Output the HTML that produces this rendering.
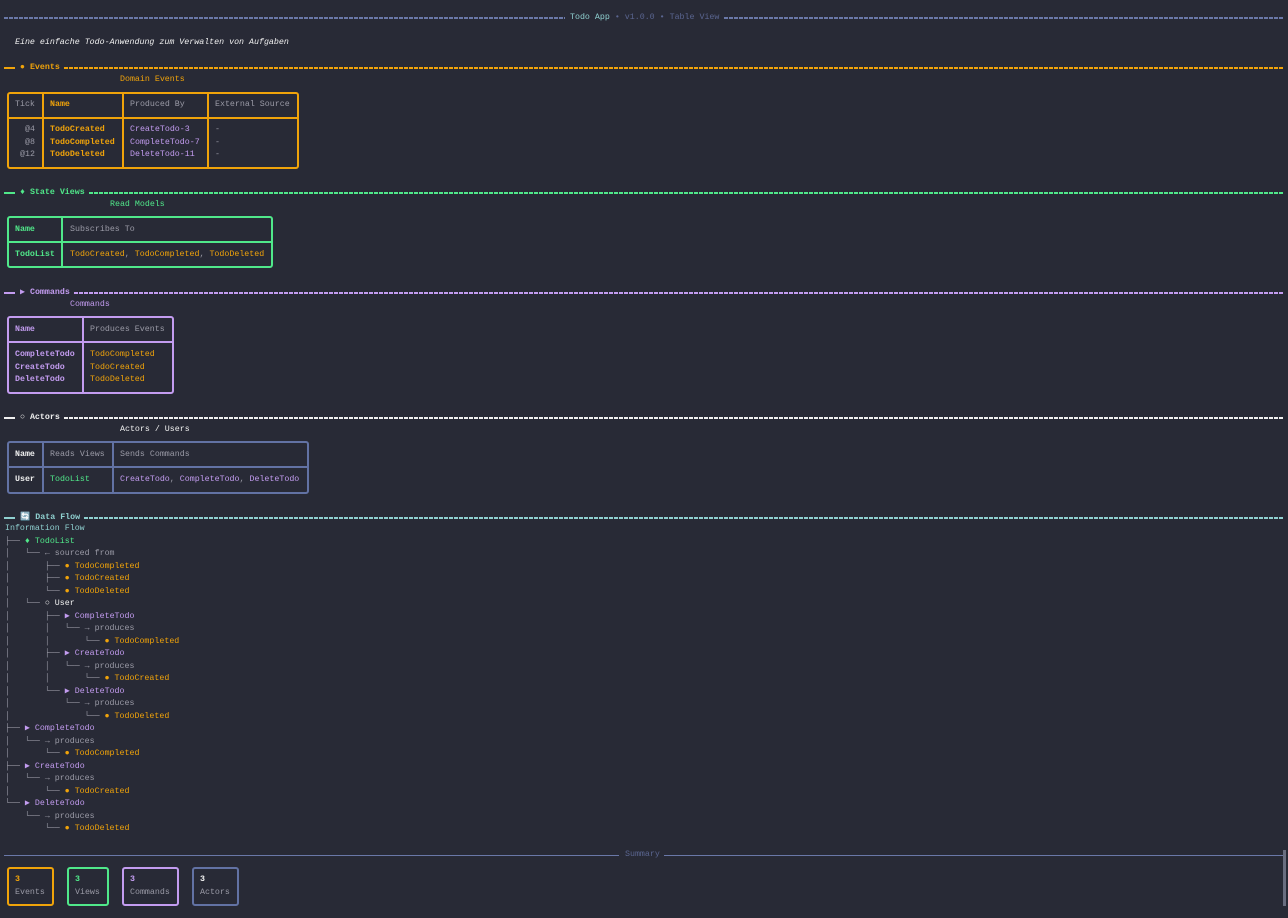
<!DOCTYPE html>
<html><head><meta charset="utf-8"><style>
body{margin:0;width:1288px;height:918px;background:#282a36;overflow:hidden;position:relative;font-family:"Liberation Mono","DejaVu Sans Mono",monospace;font-size:8.3px;color:#c8c8d0}
.a{position:absolute;white-space:pre;line-height:12px}
.hl{position:absolute;height:2px;background:repeating-linear-gradient(90deg,currentColor 0 4px,transparent 4px 5px)}
.sl{position:absolute;height:2px;background:currentColor}
.box{position:absolute;border:2px solid;border-radius:3px;box-sizing:border-box}
.v{position:absolute;width:0;border-left:2px solid}
.h{position:absolute;height:0;border-top:2px solid}
.o{color:#f0a30a}.g{color:#50e88a}.p{color:#c39cf0}.w{color:#f0f0f0}.gr{color:#9a9aa6}.t{color:#8fd0d0}.s{color:#5a6590}.sb{color:#6a78a8}
b{font-weight:bold}
pre{margin:0;font:inherit;line-height:12.5px}
</style></head><body>
<!-- header -->
<div class="hl sb" style="left:4px;top:17px;width:561px"></div>
<div class="a" style="left:570px;top:12px"><span class="t">Todo App</span><span class="s"> • v1.0.0 • Table View</span></div>
<div class="hl sb" style="left:724px;top:17px;width:560px"></div>
<div class="a w" style="left:15px;top:37px;font-style:italic">Eine einfache Todo-Anwendung zum Verwalten von Aufgaben</div>

<!-- Events -->
<div class="sl o" style="left:4px;top:67px;width:11px"></div>
<div class="a o" style="left:20px;top:62px"><b>● Events</b></div>
<div class="hl o" style="left:64px;top:67px;width:1220px"></div>
<div class="a o" style="left:120px;top:74px">Domain Events</div>
<div class="box" style="left:7px;top:92px;width:292px;height:77px;border-color:#f0a30a"></div>
<div class="h" style="left:8px;top:117px;width:290px;border-color:#f0a30a"></div>
<div class="v" style="left:42px;top:93px;height:75px;border-color:#f0a30a"></div>
<div class="v" style="left:122px;top:93px;height:75px;border-color:#f0a30a"></div>
<div class="v" style="left:207px;top:93px;height:75px;border-color:#f0a30a"></div>
<div class="a gr" style="left:15px;top:99px">Tick</div>
<div class="a o" style="left:50px;top:99px"><b>Name</b></div>
<div class="a gr" style="left:130px;top:99px">Produced By</div>
<div class="a gr" style="left:215px;top:99px">External Source</div>
<pre class="a gr" style="left:20px;top:124px;line-height:12.5px"> @4
 @8
@12</pre>
<pre class="a o" style="left:50px;top:124px;line-height:12.5px"><b>TodoCreated
TodoCompleted
TodoDeleted</b></pre>
<pre class="a p" style="left:130px;top:124px;line-height:12.5px">CreateTodo-3
CompleteTodo-7
DeleteTodo-11</pre>
<pre class="a gr" style="left:215px;top:124px;line-height:12.5px">-
-
-</pre>

<!-- State Views -->
<div class="sl g" style="left:4px;top:192px;width:11px"></div>
<div class="a g" style="left:20px;top:187px"><b>♦ State Views</b></div>
<div class="hl g" style="left:89px;top:192px;width:1195px"></div>
<div class="a g" style="left:110px;top:199px">Read Models</div>
<div class="box" style="left:7px;top:216px;width:266px;height:52px;border-color:#50e88a"></div>
<div class="h" style="left:8px;top:241px;width:264px;border-color:#50e88a"></div>
<div class="v" style="left:61px;top:217px;height:50px;border-color:#50e88a"></div>
<div class="a g" style="left:15px;top:224px"><b>Name</b></div>
<div class="a gr" style="left:70px;top:224px">Subscribes To</div>
<div class="a g" style="left:15px;top:249px"><b>TodoList</b></div>
<div class="a o" style="left:70px;top:249px">TodoCreated<span class="gr">, </span>TodoCompleted<span class="gr">, </span>TodoDeleted</div>

<!-- Commands -->
<div class="sl p" style="left:4px;top:292px;width:11px"></div>
<div class="a p" style="left:20px;top:287px"><b>▶ Commands</b></div>
<div class="hl p" style="left:74px;top:292px;width:1210px"></div>
<div class="a p" style="left:70px;top:299px">Commands</div>
<div class="box" style="left:7px;top:316px;width:167px;height:78px;border-color:#c39cf0"></div>
<div class="h" style="left:8px;top:341px;width:165px;border-color:#c39cf0"></div>
<div class="v" style="left:82px;top:317px;height:76px;border-color:#c39cf0"></div>
<div class="a p" style="left:15px;top:324px"><b>Name</b></div>
<div class="a gr" style="left:90px;top:324px">Produces Events</div>
<pre class="a p" style="left:15px;top:349px;line-height:12.5px"><b>CompleteTodo
CreateTodo
DeleteTodo</b></pre>
<pre class="a o" style="left:90px;top:349px;line-height:12.5px">TodoCompleted
TodoCreated
TodoDeleted</pre>

<!-- Actors -->
<div class="sl w" style="left:4px;top:417px;width:11px"></div>
<div class="a w" style="left:20px;top:412px"><b>○ Actors</b></div>
<div class="hl w" style="left:64px;top:417px;width:1220px"></div>
<div class="a w" style="left:120px;top:424px">Actors / Users</div>
<div class="box" style="left:7px;top:441px;width:302px;height:53px;border-color:#6272a4"></div>
<div class="h" style="left:8px;top:466px;width:300px;border-color:#6272a4"></div>
<div class="v" style="left:42px;top:442px;height:51px;border-color:#6272a4"></div>
<div class="v" style="left:112px;top:442px;height:51px;border-color:#6272a4"></div>
<div class="a w" style="left:15px;top:449px"><b>Name</b></div>
<div class="a gr" style="left:50px;top:449px">Reads Views</div>
<div class="a gr" style="left:120px;top:449px">Sends Commands</div>
<div class="a w" style="left:15px;top:474px"><b>User</b></div>
<div class="a g" style="left:50px;top:474px">TodoList</div>
<div class="a p" style="left:120px;top:474px">CreateTodo<span class="gr">, </span>CompleteTodo<span class="gr">, </span>DeleteTodo</div>

<!-- Data Flow -->
<div class="sl t" style="left:4px;top:517px;width:11px"></div>
<div class="a t" style="left:20px;top:512px"><b>🔄 Data Flow</b></div>
<div class="hl t" style="left:84px;top:517px;width:1200px"></div>
<pre class="a" style="left:5px;top:523px;line-height:12.5px"><span class="t">Information Flow</span>
<span class="gr">├── </span><span class="g">♦ TodoList</span>
<span class="gr">│   └── ← sourced from</span>
<span class="gr">│       ├── </span><span class="o">● TodoCompleted</span>
<span class="gr">│       ├── </span><span class="o">● TodoCreated</span>
<span class="gr">│       └── </span><span class="o">● TodoDeleted</span>
<span class="gr">│   └── </span><span class="w">○ User</span>
<span class="gr">│       ├── </span><span class="p">▶ CompleteTodo</span>
<span class="gr">│       │   └── → produces</span>
<span class="gr">│       │       └── </span><span class="o">● TodoCompleted</span>
<span class="gr">│       ├── </span><span class="p">▶ CreateTodo</span>
<span class="gr">│       │   └── → produces</span>
<span class="gr">│       │       └── </span><span class="o">● TodoCreated</span>
<span class="gr">│       └── </span><span class="p">▶ DeleteTodo</span>
<span class="gr">│           └── → produces</span>
<span class="gr">│               └── </span><span class="o">● TodoDeleted</span>
<span class="gr">├── </span><span class="p">▶ CompleteTodo</span>
<span class="gr">│   └── → produces</span>
<span class="gr">│       └── </span><span class="o">● TodoCompleted</span>
<span class="gr">├── </span><span class="p">▶ CreateTodo</span>
<span class="gr">│   └── → produces</span>
<span class="gr">│       └── </span><span class="o">● TodoCreated</span>
<span class="gr">└── </span><span class="p">▶ DeleteTodo</span>
<span class="gr">    └── → produces</span>
<span class="gr">        └── </span><span class="o">● TodoDeleted</span></pre>

<!-- Summary -->
<div style="position:absolute;left:4px;top:855px;width:615px;height:1px;background:#6a78a8"></div>
<div class="a s" style="left:625px;top:849px">Summary</div>
<div style="position:absolute;left:664px;top:855px;width:620px;height:1px;background:#6a78a8"></div>
<div style="position:absolute;left:1283px;top:850px;width:3px;height:56px;background:#6a6e80"></div>
<div class="box" style="left:7px;top:867px;width:47px;height:39px;border-color:#f0a30a"></div>
<div class="a o" style="left:15px;top:874px"><b>3</b></div><div class="a gr" style="left:15px;top:887px">Events</div>
<div class="box" style="left:67px;top:867px;width:42px;height:39px;border-color:#50e88a"></div>
<div class="a g" style="left:75px;top:874px"><b>3</b></div><div class="a gr" style="left:75px;top:887px">Views</div>
<div class="box" style="left:122px;top:867px;width:57px;height:39px;border-color:#c39cf0"></div>
<div class="a p" style="left:130px;top:874px"><b>3</b></div><div class="a gr" style="left:130px;top:887px">Commands</div>
<div class="box" style="left:192px;top:867px;width:47px;height:39px;border-color:#6272a4"></div>
<div class="a w" style="left:200px;top:874px"><b>3</b></div><div class="a gr" style="left:200px;top:887px">Actors</div>
</body></html>
